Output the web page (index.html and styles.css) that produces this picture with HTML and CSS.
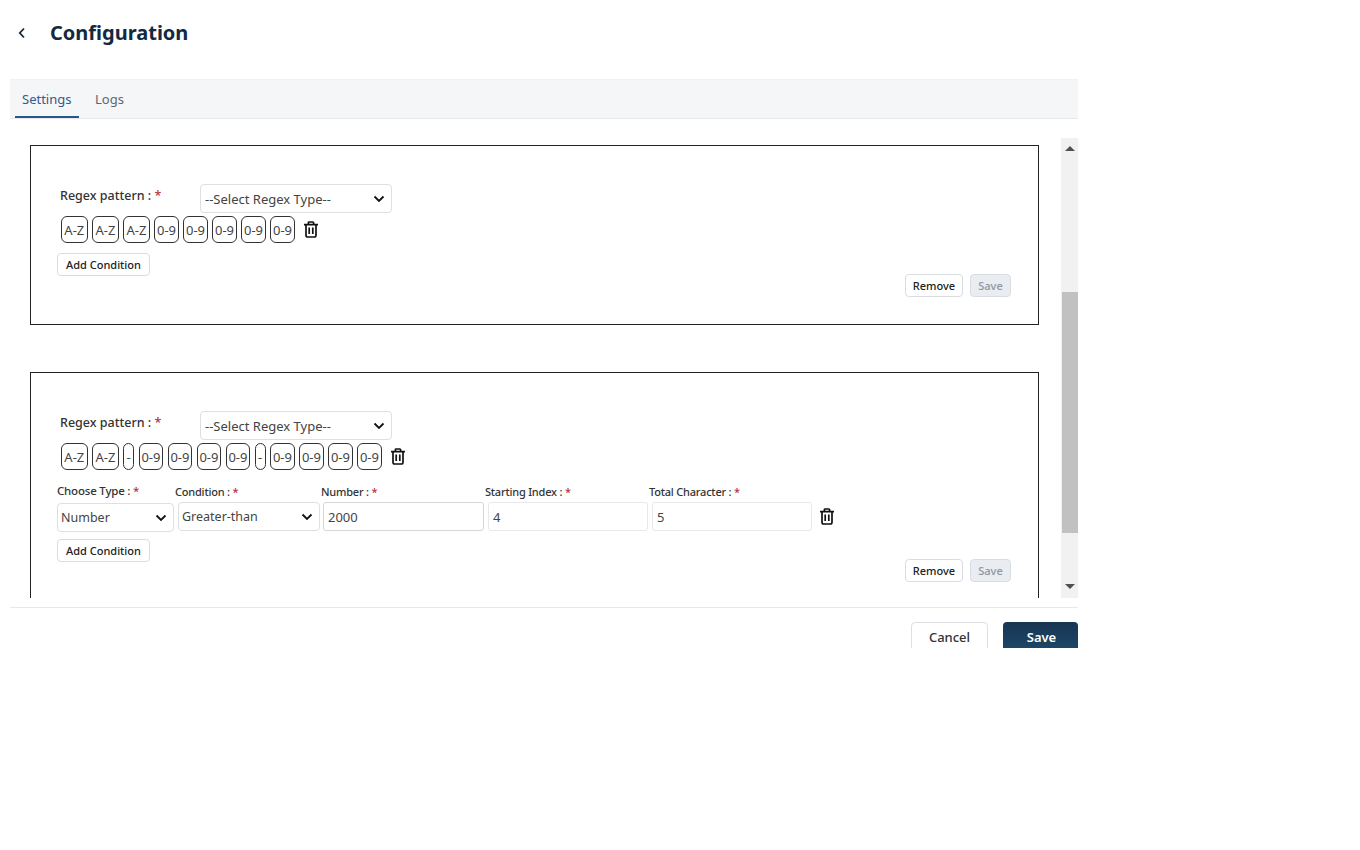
FILE: index.html
```html
<!DOCTYPE html>
<html lang="en">
<head>
  <meta charset="UTF-8">
  <meta name="viewport" content="width=device-width, initial-scale=1.0">
  <title>Configuration</title>
  <link rel="stylesheet" href="styles.css">
</head>
<body>
  <div class="app">
    <header class="page-header">
      <button class="back-btn" aria-label="Back">
        <svg width="8" height="12" viewBox="0 0 8 12"><path d="M6 1.5 1.8 6 6 10.5" fill="none" stroke="#12293f" stroke-width="1.8"/></svg>
      </button>
      <h1>Configuration</h1>
    </header>

    <nav class="tabs">
      <a class="tab active">Settings</a>
      <a class="tab">Logs</a>
    </nav>

    <div class="scroll-area">
      <div class="scroll-content">
        <section class="card">
          <div class="regex-row">
            <label class="regex-label">Regex pattern : <span class="req">*</span></label>
            <select class="select regex-select"><option>--Select Regex Type--</option></select>
          </div>
          <div class="chips">
            <span class="chip chip-alpha">A-Z</span><span class="chip chip-alpha">A-Z</span><span class="chip chip-alpha">A-Z</span>
            <span class="chip">0-9</span><span class="chip">0-9</span><span class="chip">0-9</span><span class="chip">0-9</span><span class="chip">0-9</span>
            <button class="trash" aria-label="Delete">
              <svg width="16" height="17" viewBox="0 0 16 17"><path d="M1 3.6h14M5.4 3.4V1.8c0-.5.3-.8.8-.8h3.6c.5 0 .8.3.8.8v1.6M3 3.6v10.7c0 1 .7 1.7 1.7 1.7h6.6c1 0 1.7-.7 1.7-1.7V3.6M6.2 6.6v6.4M9.8 6.6v6.4" fill="none" stroke="#111" stroke-width="1.7"/></svg>
            </button>
          </div>
          <button class="btn add-btn">Add Condition</button>
          <div class="card-actions">
            <button class="btn btn-remove">Remove</button>
            <button class="btn btn-save disabled">Save</button>
          </div>
        </section>

        <section class="card card-second">
          <div class="regex-row">
            <label class="regex-label">Regex pattern : <span class="req">*</span></label>
            <select class="select regex-select"><option>--Select Regex Type--</option></select>
          </div>
          <div class="chips">
            <span class="chip chip-alpha">A-Z</span><span class="chip chip-alpha">A-Z</span><span class="chip chip-dash">-</span>
            <span class="chip">0-9</span><span class="chip">0-9</span><span class="chip">0-9</span><span class="chip">0-9</span><span class="chip chip-dash">-</span>
            <span class="chip">0-9</span><span class="chip">0-9</span><span class="chip">0-9</span><span class="chip">0-9</span>
            <button class="trash" aria-label="Delete">
              <svg width="16" height="17" viewBox="0 0 16 17"><path d="M1 3.6h14M5.4 3.4V1.8c0-.5.3-.8.8-.8h3.6c.5 0 .8.3.8.8v1.6M3 3.6v10.7c0 1 .7 1.7 1.7 1.7h6.6c1 0 1.7-.7 1.7-1.7V3.6M6.2 6.6v6.4M9.8 6.6v6.4" fill="none" stroke="#111" stroke-width="1.7"/></svg>
            </button>
          </div>
          <div class="condition">
            <div class="field field-type">
              <label>Choose Type : <span class="req">*</span></label>
              <select class="select"><option>Number</option></select>
            </div>
            <div class="field field-cond">
              <label>Condition : <span class="req">*</span></label>
              <select class="select"><option>Greater-than</option></select>
            </div>
            <div class="field field-num">
              <label>Number : <span class="req">*</span></label>
              <input class="input input-strong" type="text" value="2000">
            </div>
            <div class="field field-start">
              <label>Starting Index : <span class="req">*</span></label>
              <input class="input" type="text" value="4">
            </div>
            <div class="field field-total">
              <label>Total Character : <span class="req">*</span></label>
              <input class="input" type="text" value="5">
            </div>
            <button class="trash trash-cond" aria-label="Delete">
              <svg width="16" height="17" viewBox="0 0 16 17"><path d="M1 3.6h14M5.4 3.4V1.8c0-.5.3-.8.8-.8h3.6c.5 0 .8.3.8.8v1.6M3 3.6v10.7c0 1 .7 1.7 1.7 1.7h6.6c1 0 1.7-.7 1.7-1.7V3.6M6.2 6.6v6.4M9.8 6.6v6.4" fill="none" stroke="#111" stroke-width="1.7"/></svg>
            </button>
          </div>
          <button class="btn add-btn add-btn-second">Add Condition</button>
          <div class="card-actions card-actions-second">
            <button class="btn btn-remove">Remove</button>
            <button class="btn btn-save disabled">Save</button>
          </div>
        </section>
      </div>

      <div class="scrollbar">
        <span class="arrow arrow-up"></span>
        <div class="thumb"></div>
        <span class="arrow arrow-down"></span>
      </div>
    </div>

    <footer class="page-footer">
      <button class="btn-lg">Cancel</button>
      <button class="btn-lg primary">Save</button>
    </footer>
  </div>
</body>
</html>
```

FILE: styles.css
```css
* {
  box-sizing: border-box;
}

body {
  margin: 0;
  font-family: "Noto Sans", "Open Sans", sans-serif;
  background: #fff;
  color: #333;
}

button, select, input {
  font-family: inherit;
}

.app {
  width: 1068px;
  height: 648px;
  margin-left: 10px;
  overflow: hidden;
}

/* header */
.page-header {
  height: 79px;
  display: flex;
  align-items: flex-start;
  padding-top: 18px;
}

.back-btn {
  width: 40px;
  height: 30px;
  padding: 2px 0 0 8px;
  border: 0;
  background: none;
  text-align: left;
}

.page-header h1 {
  margin: 0;
  font-size: 20px;
  line-height: 30px;
  font-weight: 700;
  color: #12293f;
}

/* tabs */
.tabs {
  height: 40px;
  display: flex;
  padding-left: 5px;
  background: #f5f6f8;
  border-top: 1px solid #eef0f2;
  border-bottom: 1px solid #e6e8eb;
}

.tab {
  height: 38px;
  padding: 10px 7px 0;
  margin-right: 2px;
  font-size: 13px;
  line-height: 18px;
  color: #5d6670;
}

.tab.active {
  width: 64px;
  color: #37588c;
  border-bottom: 2px solid #2f5487;
  margin-right: 9px;
}

/* scroll region */
.scroll-area {
  height: 460px;
  margin-top: 19px;
  display: flex;
  overflow: hidden;
}

.scroll-content {
  flex: 1;
  padding: 7px 22px 0 20px;
}

.scrollbar {
  width: 17px;
  height: 460px;
  background: #f1f1f1;
  display: flex;
  flex-direction: column;
  align-items: center;
}

.arrow {
  width: 0;
  height: 0;
  border-left: 5px solid transparent;
  border-right: 5px solid transparent;
}

.arrow-up {
  margin-top: 8px;
  border-bottom: 5px solid #505050;
}

.arrow-down {
  margin-top: 51px;
  border-top: 5px solid #505050;
}

.thumb {
  width: 16px;
  height: 241px;
  margin: 141px 0 0 1px;
  background: #c1c1c1;
}

/* cards */
.card {
  height: 180px;
  padding: 38px 26px 0;
  border: 1px solid #222;
  background: #fff;
}

.card-second {
  height: 260px;
  margin-top: 47px;
}

.regex-row {
  display: flex;
  align-items: flex-start;
  height: 29px;
}

.regex-label {
  width: 143px;
  padding: 3px 0 0 3px;
  font-size: 12.5px;
  line-height: 18px;
  font-weight: 500;
  color: #333;
}

.req {
  color: #b3333f;
}

.select {
  appearance: none;
  height: 29px;
  padding: 0 24px 0 4px;
  border: 1px solid #dcdfe3;
  border-radius: 4px;
  font-size: 13px;
  color: #444;
  background: #fff url("data:image/svg+xml,%3Csvg xmlns='http://www.w3.org/2000/svg' width='12' height='8' viewBox='0 0 12 8'%3E%3Cpath d='M1.5 1.5 6 6l4.5-4.5' fill='none' stroke='%23111' stroke-width='1.8'/%3E%3C/svg%3E") no-repeat right 6px center;
}

.regex-select {
  width: 192px;
}

.chips {
  display: flex;
  align-items: center;
  gap: 4.5px;
  height: 27px;
  margin: 3px 0 0 4px;
}

.chip {
  width: 24.5px;
  height: 27px;
  border: 1px solid #333;
  border-radius: 6px;
  font-size: 13px;
  line-height: 26px;
  text-align: center;
  color: #444;
}

.chip-alpha {
  width: 26.6px;
}

.chip-dash {
  width: 11px;
}

.trash {
  width: 16px;
  height: 17px;
  padding: 0;
  margin-left: 4px;
  border: 0;
  background: none;
}

.btn {
  height: 23px;
  padding: 0 8px;
  border: 1px solid #d9dce0;
  border-radius: 4px;
  background: #fff;
  font-size: 11px;
  font-weight: 500;
  color: #222;
}

.btn.disabled {
  background: #e9ecf1;
  color: #8d96a3;
}

.btn-remove {
  width: 58px;
  padding: 0;
}

.btn-save {
  width: 41px;
  padding: 0;
}

.add-btn {
  display: block;
  margin-top: 10px;
}

.add-btn-second {
  margin-top: 8px;
}

.card-actions {
  display: flex;
  justify-content: flex-end;
  gap: 7px;
  margin: -2px 1px 0 0;
}

.card-actions-second {
  margin-top: -3px;
}

/* condition row */
.condition {
  display: flex;
  align-items: flex-end;
  margin-top: 15px;
  height: 46px;
}

.field {
  display: flex;
  flex-direction: column;
  margin-right: 3px;
}

.field label {
  height: 17px;
  font-size: 11px;
  letter-spacing: -0.2px;
  line-height: 13px;
  font-weight: 500;
  color: #333;
}

.field .select, .field .input {
  width: 100%;
}

.field .select {
  padding-left: 3px;
  font-size: 12.5px;
}

.field-type { width: 117px; margin-right: 4px; position: relative; top: 1px; }
.field-type label { position: relative; top: -2px; font-size: 11.5px; }
.field-cond { width: 142px; }
.field-cond label { margin-left: -3px; }
.field-num { width: 161px; margin-right: 4px; }
.field-num label { margin-left: -2px; }
.field-start { width: 160px; margin-right: 4px; }
.field-start label { margin-left: -3px; }
.field-total { width: 160px; }
.field-total label { margin-left: -3px; }

.input {
  height: 29px;
  padding: 0 4px;
  border: 1px solid #e6e8eb;
  border-radius: 3px;
  font-size: 13px;
  color: #444;
  background: #fff;
}

.input-strong {
  border-color: #d4d7db;
}

.trash-cond {
  margin: 0 0 6px 4px;
}

/* footer */
.page-footer {
  display: flex;
  justify-content: flex-end;
  gap: 15px;
  height: 41px;
  margin-top: 9px;
  padding-top: 14px;
  border-top: 1px solid #e6e8eb;
}

.btn-lg {
  width: 77px;
  height: 30px;
  border: 1px solid #dcdfe3;
  border-radius: 4px;
  background: #fff;
  font-size: 13px;
  font-weight: 500;
  color: #333;
}

.btn-lg.primary {
  width: 75px;
  padding-left: 8px;
  border: 0;
  background: linear-gradient(#173653, #1e4768);
  color: #fff;
  font-weight: 600;
}
```
